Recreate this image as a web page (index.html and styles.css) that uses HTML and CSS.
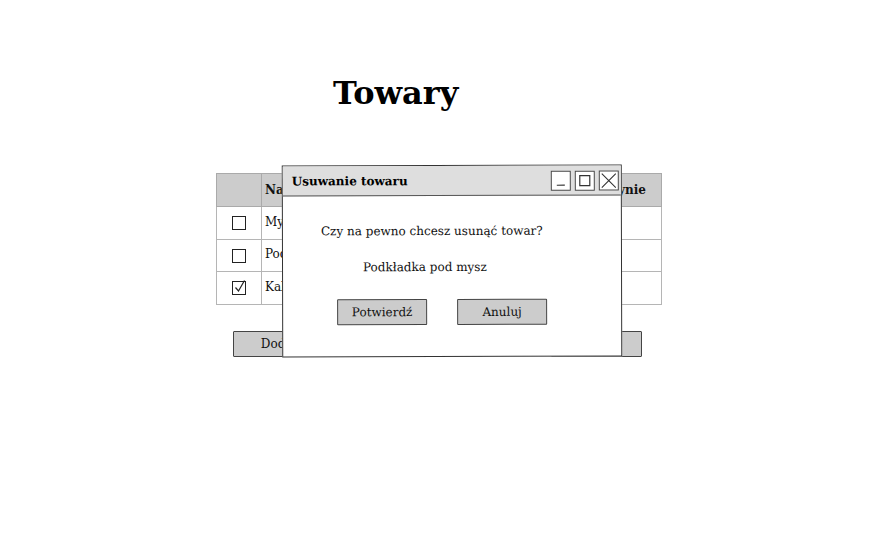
FILE: index.html
```html
<!DOCTYPE html>
<html lang="pl">
<head>
<meta charset="utf-8">
<title>Towary</title>
<link rel="stylesheet" href="styles.css">
</head>
<body>
<div class="page">
  <h1 class="title">Towary</h1>
  <table class="grid">
    <thead>
      <tr><th class="c-check"></th><th class="c-name">Nazwa</th><th class="c-price">Cena</th><th class="c-qty">W magazynie</th></tr>
    </thead>
    <tbody>
      <tr><td class="c-check"><span class="box"></span></td><td>Myszka</td><td></td><td></td></tr>
      <tr><td class="c-check"><span class="box"></span></td><td>Podkładka</td><td></td><td></td></tr>
      <tr><td class="c-check"><span class="box checked"><svg viewBox="0 0 14 14" width="14" height="14"><path d="M2.5 7.5 L5.5 11 L11.5 0.5" fill="none" stroke="#222" stroke-width="1.2"/></svg></span></td><td>Kalkulator</td><td></td><td></td></tr>
    </tbody>
  </table>
  <div class="actions">
    <button class="btn act">Dodaj</button>
    <button class="btn act">Edytuj</button>
    <button class="btn act">Usuń</button>
  </div>

  <div class="dialog">
    <div class="dlg-bar">
      <span class="dlg-title">Usuwanie towaru</span>
      <span class="dlg-ctrls">
        <span class="ctl"><svg viewBox="0 0 20 20" width="20" height="20"><path d="M6 14.5 H14" stroke="#333" stroke-width="1.2"/></svg></span>
        <span class="ctl"><svg viewBox="0 0 20 20" width="20" height="20"><rect x="5" y="5" width="10" height="10" fill="none" stroke="#333" stroke-width="1.2"/></svg></span>
        <span class="ctl"><svg viewBox="0 0 20 20" width="20" height="20"><path d="M3 3 L17 17 M17 3 L3 17" stroke="#333" stroke-width="1.1"/></svg></span>
      </span>
    </div>
    <div class="dlg-body">
      <p class="q">Czy na pewno chcesz usunąć towar?</p>
      <p class="item">Podkładka pod mysz</p>
      <div class="dlg-actions">
        <button class="btn">Potwierdź</button>
        <button class="btn">Anuluj</button>
      </div>
    </div>
  </div>
</div>
</body>
</html>
```
FILE: styles.css
```css
* { box-sizing: border-box; }
html, body { margin: 0; padding: 0; background: #fff; }
body { font-family: "DejaVu Serif", serif; color: #111; }

.page {
  position: relative;
  width: 891px;
  height: 536px;
  padding-top: 73px;
}

.title {
  margin: 0 0 0 333px;
  font-size: 32px;
  font-weight: bold;
  line-height: 40px;
  color: #000;
}

.grid {
  margin: 60px 0 0 216px;
  width: 446px;
  border-collapse: collapse;
  font-size: 12px;
  table-layout: fixed;
}
.grid th, .grid td {
  border: 1px solid #b5b5b5;
  padding: 0 0 0 3px;
  text-align: left;
  white-space: nowrap;
  overflow: hidden;
}
.grid th {
  background: #cccccc;
  height: 33px;
  font-weight: bold;
  border-color: #aaa;
}
.grid td { height: 32.5px; padding-bottom: 2px; }
.grid .c-check { width: 45px; text-align: center; padding: 0; }
.grid .c-name { width: 150px; }
.grid .c-price { width: 110px; }
.grid .c-qty { text-align: right; padding-right: 15px; }

.box {
  display: inline-block;
  width: 14px;
  height: 14px;
  border: 1px solid #222;
  vertical-align: middle;
  position: relative;
  margin-right: 1px;
}
.box.checked svg { position: absolute; left: 0; top: -2px; }

.actions {
  display: flex;
  gap: 68px;
  margin: 26px 0 0 233px;
}
.btn {
  font-family: "DejaVu Serif", serif;
  font-size: 12px;
  color: #111;
  background: #cccccc;
  border: 1.5px solid #444;
  border-radius: 1px;
  height: 26px;
  width: 90px;
  padding: 0;
}
.act { width: 91px; }

.dialog {
  position: absolute;
  left: 282px;
  top: 165px;
  width: 340px;
  height: 192px;
  background: #fff;
  border: 1.5px solid #333;
  transform: rotate(-0.15deg);
}
.dlg-bar {
  height: 30px;
  background: #dedede;
  border-bottom: 1.5px solid #555;
  display: flex;
  align-items: center;
  justify-content: space-between;
  padding: 0 2px 0 9px;
}
.dlg-title { font-weight: bold; font-size: 12px; color: #000; padding-top: 1px; }
.dlg-ctrls { display: flex; gap: 4px; }
.ctl {
  width: 20px;
  height: 20px;
  border: 1.5px solid #444;
  background: #fff;
  display: flex;
  align-items: center;
  justify-content: center;
  overflow: hidden;
}
.ctl svg { flex: none; }

.dlg-body { padding: 26px 0 0 0; font-size: 12px; }
.q { margin: 0 0 0 38px; line-height: 18px; }
.item { margin: 18px 0 0 80px; line-height: 18px; }
.dlg-actions {
  display: flex;
  gap: 30px;
  margin: 23px 0 0 54px;
}
```
